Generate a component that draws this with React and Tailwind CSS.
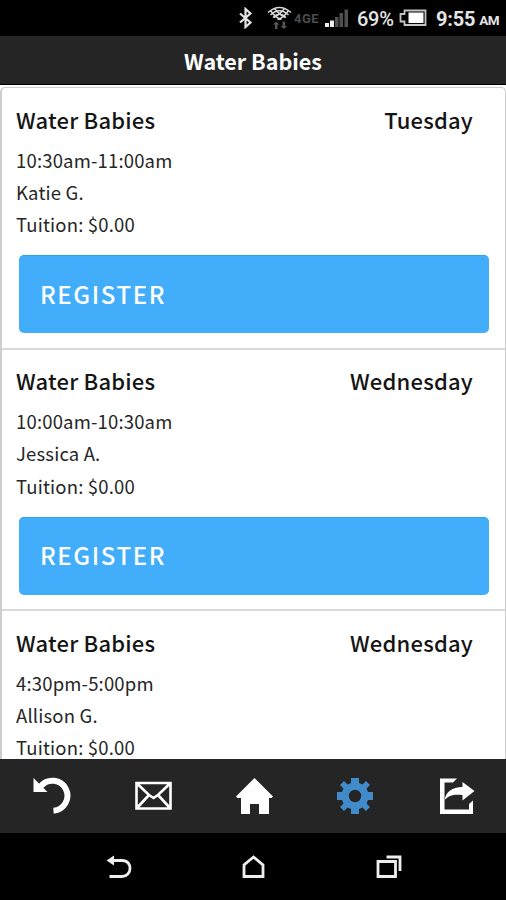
const classes = [
  { day: "Tuesday", time: "10:30am-11:00am", teacher: "Katie G." },
  { day: "Wednesday", time: "10:00am-10:30am", teacher: "Jessica A." },
  { day: "Wednesday", time: "4:30pm-5:00pm", teacher: "Allison G." },
];

function StatusBar() {
  return (
    <div className="flex h-9 shrink-0 items-center bg-black pl-[238px] font-[Roboto,sans-serif] text-[#e4e4e4]">
      <svg className="h-[22px] w-[15px]" viewBox="0 0 15 22" fill="none" stroke="currentColor" strokeWidth="2.200">
        <path d="M2 6.500 12.500 15.500 7.500 20V2L12.500 6.500 2 15.500" />
      </svg>
      <svg className="ml-[13px] h-[26px] w-7" viewBox="0 0 28 26" fill="none" stroke="#d8d8d8" strokeWidth="1.500">
        <path d="M2 7.500Q13.500-2.500 25 7.500M4.500 10Q13.500 1.500 22.500 10M7 12.500Q13.500 6 20 12.500M4.500 5.500Q9 12.500 15.500 14.500M22.500 5.500Q18 12.500 11.500 14.500M8.500 3.500Q13.500 10 19.500 12.500M18.500 3.500Q13.500 10 7.500 12.500" />
        <path stroke="none" fill="#555" d="m10 16.500-3 3h2v4.500h2.500v-4.500h2zM18 24l3-3h-2v-4.500h-2.500V21h-2z" />
      </svg>
      <span className="ml-0 w-[28px] text-[13px] font-bold leading-none tracking-[0.500px] text-[#4c4c4c]">4GE</span>
      <svg className="ml-[3px] h-[18px] w-6" viewBox="0 0 24 18">
        <path fill="#eee" d="M0 14h4v4H0zM5 11.500h4V18H5z" />
        <path fill="#505050" d="M10 8h3.500v10H10zM14.500 4H18v14h-3.500zM19.500 0.500H23V18h-3.500z" />
      </svg>
      <span className="ml-[8px] w-[38px] whitespace-nowrap pt-[2px] text-[20px] font-medium leading-none tracking-[-0.300px]">69%</span>
      <svg className="ml-[4px] h-[18px] w-7" viewBox="0 0 28 18" fill="none" stroke="#c4c4c4" strokeWidth="1.800">
        <path d="M5.500 1.500H26.500V16H5.500V12.500H1.500V5H5.500Z" />
        <path fill="#fff" stroke="none" d="M9.500 3.500h15v10.500h-15z" />
      </svg>
      <span className="ml-[9px] whitespace-nowrap pt-[2px] text-[20px] font-bold leading-none tracking-[-0.200px]">9:55</span>
      <span className="ml-[4px] mt-[6px] text-[13.500px] font-bold leading-none tracking-[-0.500px]">AM</span>
    </div>
  );
}

function ClassCard({ item }) {
  return (
    <section className="h-[261.500px] shrink-0 border-b-2 border-[#d9d9d9] pl-[14px] pr-4 pt-[14.500px] text-[#262626]">
      <div className="flex h-8 items-center justify-between pr-4 text-[22px] font-medium leading-8 tracking-[0.200px] text-[#151515]">
        <h2>Water Babies</h2>
        <span>{item.day}</span>
      </div>
      <div className="mt-[9px] text-[18.500px] leading-[32.300px] tracking-[0.170px]">
        <p>{item.time}</p>
        <p>{item.teacher}</p>
        <p>Tuition: $0.00</p>
      </div>
      <button className="ml-[3px] mt-[15px] flex h-[78px] w-[470px] items-center rounded-[5px] border-t border-[#27a2f4] bg-[#42aefb] pb-[2px] pl-[21px] text-[24px] font-medium tracking-[1.600px] text-white">
        REGISTER
      </button>
    </section>
  );
}

function TabBar() {
  return (
    <nav className="flex h-[74px] shrink-0 items-center justify-between bg-[#252525] pl-8 pr-[30px] text-white">
      <svg className="size-10" viewBox="0 0 40 40">
        <path d="M9 10A15 15 0 1 1 21.500 34.700" fill="none" stroke="currentColor" strokeWidth="6" />
        <path d="M1.500 2v14H15.500Z" fill="currentColor" />
      </svg>
      <svg className="size-10" viewBox="0 0 40 40" fill="none" stroke="currentColor" strokeWidth="2.600">
        <path d="M3.500 7H37.500V32.500H3.500ZM3.500 7 16 19 20.500 22 25 19 37.500 7M3.500 32.500 16 19M37.500 32.500 25 19" />
      </svg>
      <svg className="size-10" viewBox="0 0 40 40" fill="currentColor">
        <path d="M20.500 2 39 20.500 37.500 22H35V38H25V28H16V38H7V22H3.500L2 20.500Z" />
      </svg>
      <svg className="size-10 text-[#428bca]" viewBox="-20 -20 40 40" fill="currentColor">
        <path fillRule="evenodd" d="M-4-18H4V-13L7.500-11.500 11-15 15-11 11.500-7.500 13-4H18V4H13L11.500 7.500 15 11 11 15 7.500 11.500 4 13V18H-4V13L-7.500 11.500-11 15-15 11-11.500 7.500-13 4H-18V-4H-13L-11.500-7.500-15-11-11-15-7.500-11.500-4-13ZM0-6.200A6.200 6.200 0 1 0 0 6.200 6.200 6.200 0 1 0 0-6.200Z" />
      </svg>
      <svg className="size-10" viewBox="0 0 40 40" fill="currentColor">
        <path d="M4 2.500H21L17 6.500H8.500V33.500H33V28L37 24.500V38H4Z" />
        <path d="M26.500 6 38.500 15 26.500 24.500V19C18 18 13 19 8.500 24 10 16 16 11 26.500 11Z" />
      </svg>
    </nav>
  );
}

function SystemNav() {
  return (
    <div className="flex h-[67px] shrink-0 items-center justify-between bg-black px-[104px] text-[#eee]">
      <svg className="size-7" viewBox="0 0 28 28" fill="none" stroke="currentColor" strokeWidth="2.800">
        <path d="M8 7.500H18C24 7.500 26 11.500 26 15.500S23 23.500 18 23.500H5.500" />
        <path d="M2.500 7.500 10 2.500V12.500Z" fill="currentColor" stroke="none" />
      </svg>
      <svg className="size-7" viewBox="0 0 28 28" fill="none" stroke="currentColor" strokeWidth="2.800">
        <path d="M5 23.500V12L14.500 4 24 12V23.500Z" />
      </svg>
      <svg className="size-7" viewBox="0 0 28 28" fill="none" stroke="currentColor" strokeWidth="2.800">
        <path d="M4 8.500H21.500V23.500H4ZM12.500 4H26V18" />
      </svg>
    </div>
  );
}

export default function App() {
  return (
    <div className="flex h-[900px] w-[506px] flex-col overflow-hidden bg-white font-['Noto_Sans_CJK_SC',sans-serif]">
      <StatusBar />
      <header className="flex h-[49px] shrink-0 items-center justify-center border-b border-black bg-[#252525] pt-[3px] text-[21.500px] font-bold text-white">
        <h1>Water Babies</h1>
      </header>
      <main className="min-h-0 flex-1 overflow-hidden pt-[2px]">
        <div className="flex flex-col rounded-t-[5px] border-l-2 border-r border-t border-[#cdcdcd]">
          {classes.map((item, i) => (
            <ClassCard key={i} item={item} />
          ))}
        </div>
      </main>
      <TabBar />
      <SystemNav />
    </div>
  );
}
